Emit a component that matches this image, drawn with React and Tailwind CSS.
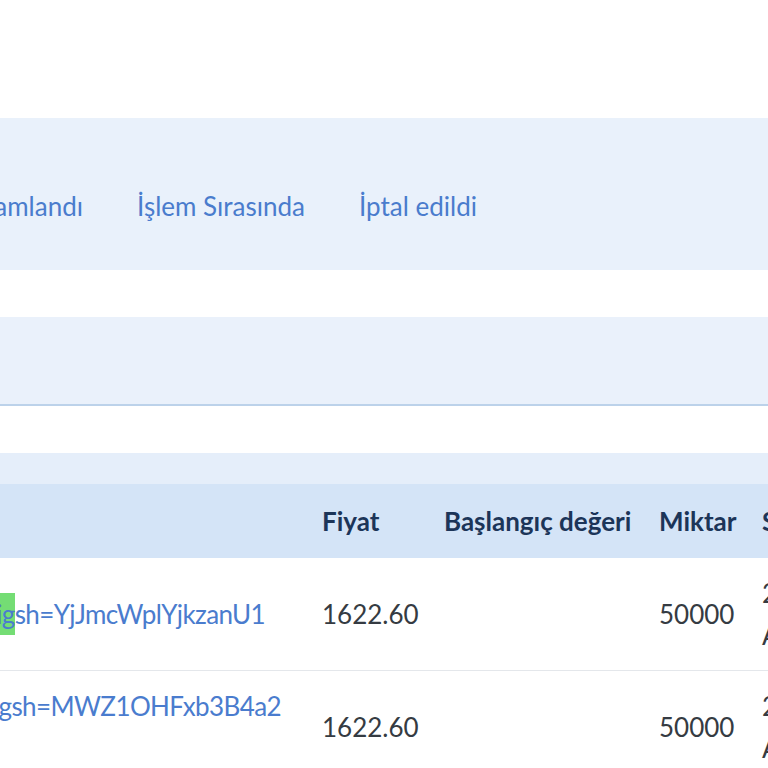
import React from 'react';

const tabs = ['İşlem Sırasında', 'İptal edildi'];

const orders = [
  {
    link: 'https://www.instagram.com/reel/C7xQpL2/?',
    hit: 'ig',
    tail: 'sh=YjJmcWplYjkzanU1',
    end: 'pr-[37px]',
    price: '1622.60',
    start: '',
    qty: '50000',
    date: ['2024-05-21', 'Aktif'],
  },
  {
    link: 'https://www.instagram.com/p/C7wRt9m/?i',
    hit: '',
    tail: 'gsh=MWZ1OHFxb3B4a2',
    end: 'pr-[21px]',
    extra: 'Nw==',
    price: '1622.60',
    start: '',
    qty: '50000',
    date: ['2024-05-21', 'Aktif'],
  },
];

const App = () => {
  return (
    <div className="min-h-screen w-full overflow-hidden bg-white font-['Lato',sans-serif] text-[26px] leading-[42px]">
      <div className="h-[118px]" />

      {/* Status tabs */}
      <nav className="flex h-[152px] items-start gap-[54px] bg-[#e9f1fb] pt-[67px] text-[#4a7ccd]">
        <div className="flex w-[83px] shrink-0 justify-end overflow-hidden whitespace-nowrap">
          <span>Tamamlandı</span>
        </div>
        {tabs.map((tab) => (
          <span key={tab} className="whitespace-nowrap">
            {tab}
          </span>
        ))}
      </nav>

      {/* Filter bar */}
      <div className="mt-[47px] h-[89px] border-b-2 border-[#bcd2ea] bg-[#eaf1fb]" />

      {/* Orders table */}
      <div className="mt-[47px]">
        <div className="h-[31px] bg-[#e5eefa]" />
        <div className="grid h-[74px] grid-cols-[302px_122px_215px_103px_1fr] items-center bg-[#d4e4f7] font-bold text-[#1c3559]">
          <div />
          <div className="pl-[20px]">Fiyat</div>
          <div className="whitespace-nowrap pl-[20px]">Başlangıç değeri</div>
          <div className="pl-[20px]">Miktar</div>
          <div className="whitespace-nowrap pl-[20px]">Son tarih</div>
        </div>

        {orders.map((order, index) => (
          <div
            key={index}
            className="grid grid-cols-[302px_122px_215px_103px_1fr] items-center border-b border-[#e4e7eb] py-[14px] text-[#353b42]"
          >
            <div className="overflow-hidden tracking-[-0.6px] text-[#4a7cce]">
              <div className={`flex justify-end whitespace-nowrap ${order.end}`}>
                <span>{order.link}</span>
                {order.hit && <span className="bg-[#74dd74]">{order.hit}</span>}
                <span>{order.tail}</span>
              </div>
              {order.extra && <div className="h-[42px]" />}
            </div>
            <div className="pl-[20px]">{order.price}</div>
            <div className="pl-[20px]">{order.start}</div>
            <div className="pl-[20px]">{order.qty}</div>
            <div className="whitespace-nowrap pl-[20px]">
              <div>{order.date[0]}</div>
              <div>{order.date[1]}</div>
            </div>
          </div>
        ))}
      </div>
    </div>
  );
};

export default App;
